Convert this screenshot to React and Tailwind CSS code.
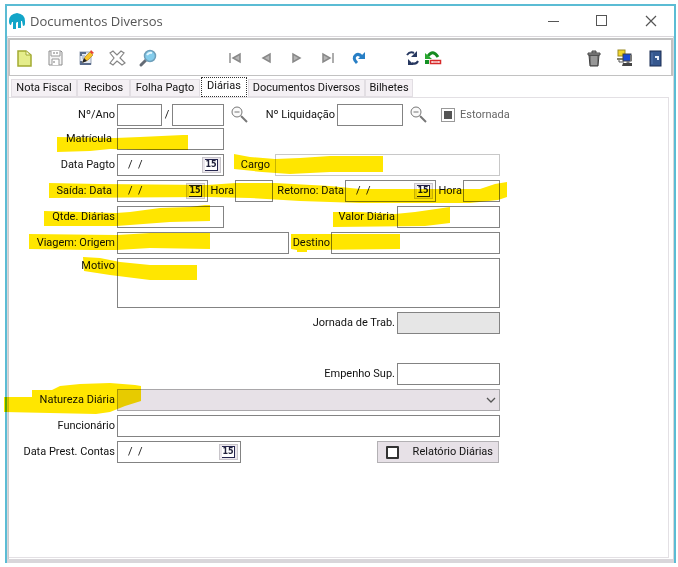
import React from 'react';

const tabs = [
  { label: 'Nota Fiscal', width: 'w-[66px]' },
  { label: 'Recibos', width: 'w-[53px]' },
  { label: 'Folha Pagto', width: 'w-[70px]' },
  { label: 'Diárias', width: 'w-[46px]', active: true },
  { label: 'Documentos Diversos', width: 'w-[117px]' },
  { label: 'Bilhetes', width: 'w-[48px]' },
];

// marker strokes laid over the fields that have to be filled in
const strokes = [
  'M57 137L115 138L140 137L183 135L188 135V150H150L110 149L90 151L57 152Z',
  'M234 154L250 157L275 159L300 158L330 156H383V172H330L290 174L262 172L234 169Z',
  'M49 183L100 184L207 185L236 183H275L330 186L360 189H480L495 184L507 182V197L498 200L470 203H360L300 201L250 198L207 197L49 198Z',
  'M44 211L116 213L130 212L160 208L190 207L205 205H210V221L170 222L130 225L116 226H44Z',
  'M29 234L117 235L150 233H210V249L150 248L117 250H90L29 249Z',
  'M83 257L100 258L120 262L150 265H197V280H150L110 275L84 271Z',
  'M333 212H360L395 214L415 212L450 207V223L425 226L333 227Z',
  'M291 234H400V249L307 250V252H297V250L291 249Z',
  'M4 397H32V390H52L60 386L80 384L110 383L135 385L141 386V401L125 406L110 412L96 414L50 413L4 412Z',
];

const Icon = ({ children, size = 20 }) => (
  <svg width={size} height={size} viewBox="0 0 20 20" fill="none" aria-hidden="true">
    {children}
  </svg>
);

const ToolButton = ({ label, children }) => (
  <button type="button" aria-label={label} className="flex size-5 items-center justify-center">
    <Icon>{children}</Icon>
  </button>
);

const LookupButton = ({ label }) => (
  <button type="button" aria-label={label} className="mx-[6px] size-5 shrink-0">
    <Icon>
      <path d="M11 11L17 17" stroke="#777" strokeWidth="2" />
      <circle cx="7" cy="7" r="5" fill="#fafafa" stroke="#777" />
      <path d="M4.5 7H9.500" stroke="#777" />
    </Icon>
  </button>
);

const Label = ({ htmlFor, className = '', children }) => (
  <label htmlFor={htmlFor} className={`shrink-0 whitespace-nowrap text-right ${className}`}>
    {children}
  </label>
);

const Field = ({ id, className = '', ...rest }) => (
  <input id={id} type="text" className={`h-[22px] min-w-0 border border-[#838383] px-1 outline-none ${className}`} {...rest} />
);

const DateField = ({ id, className = '' }) => (
  <div className={`flex h-[22px] items-center border border-[#838383] bg-white pr-[2px] ${className}`}>
    <input id={id} type="text" defaultValue="/  /" className="min-w-0 flex-1 whitespace-pre bg-transparent pl-[10px] outline-none" />
    <button type="button" aria-label="Abrir calendário" className="flex h-4 w-[19px] shrink-0 items-center justify-center border border-[#c8c5ca] bg-[#ebe7ec]">
      <span className="flex h-3 w-[13px] items-center justify-center border-t border-r border-b border-[#26264f] bg-white font-['DejaVu_Sans'] text-[8px] leading-none font-bold text-[#22223c]">15</span>
    </button>
  </div>
);

const Toolbar = () => (
  <div className="flex h-[38px] items-center border-2 border-b border-[#c2c2c2] bg-white px-1">
    <div className="flex gap-[11px]">
      <ToolButton label="Novo">
        <path d="M4 3H12L17 7V18H4Z" fill="#e5ed8b" stroke="#a2aa32" strokeWidth="1.500" />
        <path d="M12 3V7H16" fill="#fbfddb" stroke="#a2aa32" />
      </ToolButton>
      <ToolButton label="Salvar">
        <path d="M4 3H16L17 4V17H4Z" fill="#f5f5f5" stroke="#8d8d8d" />
        <path d="M6 3V8H15V3M7 17V11H14V17" fill="#fff" stroke="#999" />
        <path d="M9 4V6M12 4V6M9 13V15" stroke="#777" />
      </ToolButton>
      <ToolButton label="Editar">
        <rect x="4" y="4" width="11" height="12" fill="#e4e9f2" stroke="#9aa5b8" />
        <path d="M4 4H10V6H6V8H4ZM4 13H6V15H15V17H4Z" fill="#5a6c8b" />
        <path d="M6 8H9M6 10H8" stroke="#8fa2c1" />
        <path d="M7 14L9 9L14 4L17 7L12 12Z" fill="#f8c52c" stroke="#b3861a" strokeWidth=".7" />
        <path d="M14 4L15 2L18 5L16 6Z" fill="#e83f35" />
        <path d="M6 15L8 10L11 13Z" fill="#222" />
      </ToolButton>
      <ToolButton label="Excluir">
        <path d="M3 5L6 3L10 7L14 3L17 5L13 10L18 15L15 17L10 13L6 17L3 15L7 10Z" fill="#fff" stroke="#858585" strokeWidth="1.200" />
      </ToolButton>
      <ToolButton label="Pesquisar">
        <path d="M8 12L3 17" stroke="#646b75" strokeWidth="3" strokeLinecap="round" />
        <circle cx="12" cy="8" r="5.500" fill="#84cdec" stroke="#6f9fba" strokeWidth="1.500" />
        <path d="M9 7Q11 4 14 5" stroke="#e3f7ff" strokeWidth="2" />
      </ToolButton>
    </div>
    <div className="ml-[67px] flex gap-[11px]">
      <ToolButton label="Primeiro">
        <path d="M5 5V15" stroke="#929292" strokeWidth="1.500" />
        <path d="M15 6V14L8 10Z" fill="#b5b5b5" stroke="#888" strokeWidth="1.500" />
      </ToolButton>
      <ToolButton label="Anterior">
        <path d="M14 6V14L7 10Z" fill="#b5b5b5" stroke="#888" strokeWidth="1.500" />
      </ToolButton>
      <ToolButton label="Próximo">
        <path d="M6 6V14L13 10Z" fill="#b5b5b5" stroke="#888" strokeWidth="1.500" />
      </ToolButton>
      <ToolButton label="Último">
        <path d="M5 6V14L12 10Z" fill="#b5b5b5" stroke="#888" strokeWidth="1.500" />
        <path d="M15 5V15" stroke="#929292" strokeWidth="1.500" />
      </ToolButton>
      <ToolButton label="Atualizar">
        <path d="M8 15Q3 10 7 7Q10 5 13 9" stroke="#287fc5" strokeWidth="3" />
        <path d="M9 11H16V4Z" fill="#287fc5" />
      </ToolButton>
    </div>
    <div className="ml-[34px] flex">
      <ToolButton label="Sincronizar">
        <path d="M4 7Q7 3 11 5" stroke="#26375f" strokeWidth="2" />
        <path d="M8 9H14V3Z" fill="#26375f" />
        <path d="M15 13Q13 17 9 15" stroke="#26375f" strokeWidth="2" />
        <path d="M5 17V11L11 17Z" fill="#26375f" />
      </ToolButton>
      <ToolButton label="Estornar">
        <path d="M5 8Q10 1 15 9" stroke="#168a20" strokeWidth="3" />
        <path d="M2 5V11H9Z" fill="#28a72e" />
        <rect x="2" y="12" width="4" height="4" fill="#139124" />
        <rect x="7.500" y="12.500" width="10" height="3" fill="#fff" stroke="#d72a2a" strokeWidth="1.500" />
        <path d="M10 14H15" stroke="#ec8181" />
      </ToolButton>
    </div>
    <div className="ml-auto flex gap-[11px]">
      <ToolButton label="Lixeira">
        <path d="M4 7H14L13 18H5Z" fill="#737373" stroke="#3e3e3e" />
        <path d="M7 8V17M9 8V17M11 8V17" stroke="#bdbdbd" />
        <path d="M3 5H15V7H3ZM7 5V3H11V5" fill="#999" stroke="#484848" />
      </ToolButton>
      <ToolButton label="Rede">
        <rect x="2" y="2" width="7" height="6" fill="#f1d52a" stroke="#9b8b26" />
        <path d="M1 10H8V12H1Z" fill="#80806a" />
        <path d="M3 12V14H8" stroke="#555" />
        <rect x="7" y="6" width="8" height="7" fill="#1749d4" stroke="#414141" />
        <path d="M7 15H16V18H6Z" fill="#444" />
        <path d="M12 13V15" stroke="#777" strokeWidth="3" />
        <path d="M15 7V13" stroke="#777" strokeWidth="2" />
      </ToolButton>
      <ToolButton label="Sair">
        <rect x="3" y="3" width="11" height="15" fill="#36588f" stroke="#1b2d52" />
        <path d="M5 5V16" stroke="#5679af" />
        <path d="M8 8H12V12H10V10H8Z" fill="#e6edf8" />
      </ToolButton>
    </div>
  </div>
);

const TravelForm = () => (
  <form className="flex max-w-[510px] flex-col gap-1 pt-[6px]">
    <div className="flex flex-col gap-[2px]">
      <div className="flex items-center">
        <Label htmlFor="numero" className="w-[108px] pr-[2px]">Nº/Ano</Label>
        <Field id="numero" className="w-[45px]" />
        <span className="w-[10px] text-center">/</span>
        <Field aria-label="Ano" className="w-[52px]" />
        <LookupButton label="Buscar documento" />
        <Label htmlFor="liquidacao" className="w-[81px] pr-[2px]">Nº Liquidação</Label>
        <Field id="liquidacao" className="w-[66px]" />
        <LookupButton label="Buscar liquidação" />
        <label className="ml-[6px] flex items-center gap-[5px] text-[#666]">
          <input type="checkbox" disabled defaultChecked className="size-[14px] appearance-none border border-[#999] bg-[#555] bg-clip-content p-[2px]" />
          Estornada
        </label>
      </div>
      <div className="flex items-center">
        <Label htmlFor="matricula" className="w-[108px] pr-[5px]">Matrícula</Label>
        <Field id="matricula" className="w-[107px]" />
      </div>
    </div>
    <div className="mr-[19px] flex flex-col gap-1">
      <div className="flex items-center">
        <Label htmlFor="pagto" className="w-[108px] pr-[2px]">Data Pagto</Label>
        <DateField id="pagto" className="w-[107px]" />
        <Label htmlFor="cargo" className="w-[51px] pr-[5px]">Cargo</Label>
        <Field id="cargo" className="flex-1 border-[#c8c8c8]" />
      </div>
      <div className="flex items-center">
        <Label htmlFor="saida" className="w-[108px] pr-[5px]">Saída: Data</Label>
        <DateField id="saida" className="w-[91px]" />
        <Label htmlFor="hora-saida" className="w-[27px] pr-px">Hora</Label>
        <Field id="hora-saida" className="w-[38px]" />
        <Label htmlFor="retorno" className="w-[72px] pr-px">Retorno: Data</Label>
        <DateField id="retorno" className="w-[91px]" />
        <Label htmlFor="hora-retorno" className="w-[27px] pr-px">Hora</Label>
        <Field id="hora-retorno" className="flex-1" />
      </div>
      <div className="flex items-center">
        <Label htmlFor="qtde" className="w-[108px] pr-[2px]">Qtde. Diárias</Label>
        <Field id="qtde" className="w-[107px]" />
        <Label htmlFor="valor" className="ml-auto pr-[2px]">Valor Diária</Label>
        <Field id="valor" className="w-[103px]" />
      </div>
      <div className="flex items-center">
        <Label htmlFor="origem" className="w-[108px] pr-[2px]">Viagem: Origem</Label>
        <Field id="origem" className="w-[172px]" />
        <Label htmlFor="destino" className="w-[42px] pr-px">Destino</Label>
        <Field id="destino" className="flex-1" />
      </div>
      <div className="flex">
        <Label htmlFor="motivo" className="w-[108px] pr-[2px]">Motivo</Label>
        <textarea id="motivo" className="h-[50px] min-w-0 flex-1 resize-none border border-[#838383] p-1 outline-none" />
      </div>
      <div className="flex items-center justify-end">
        <Label htmlFor="jornada" className="pr-[2px]">Jornada de Trab.</Label>
        <Field id="jornada" disabled className="w-[103px] bg-[#e6e6e6]" />
      </div>
      <div className="mt-[25px] flex items-center justify-end">
        <Label htmlFor="empenho" className="pr-[2px]">Empenho Sup.</Label>
        <Field id="empenho" className="w-[103px]" />
      </div>
      <div className="flex items-center">
        <Label htmlFor="natureza" className="w-[108px] pr-[2px]">Natureza Diária</Label>
        <div className="relative flex-1">
          <select id="natureza" className="block h-[22px] w-full appearance-none border border-[#a9a7aa] bg-[#e7e1e7] outline-none" />
          <svg className="pointer-events-none absolute top-[7px] right-1" width="10" height="8" viewBox="0 0 10 8" fill="none" aria-hidden="true">
            <path d="M1 2L5 6L9 2" stroke="#555" strokeWidth="1.300" />
          </svg>
        </div>
      </div>
      <div className="flex items-center">
        <Label htmlFor="funcionario" className="w-[108px] pr-[2px]">Funcionário</Label>
        <Field id="funcionario" className="flex-1" />
      </div>
      <div className="flex items-center">
        <Label htmlFor="contas" className="w-[108px] pr-[2px]">Data Prest. Contas</Label>
        <DateField id="contas" className="w-[124px]" />
        <button type="button" className="mr-px ml-auto flex h-[22px] w-[122px] items-center justify-between border border-[#b3b1b4] bg-[#e7e1e7] pr-[5px] pl-2">
          <span className="size-[13px] rounded-[1px] border-2 border-[#333] bg-white" />
          Relatório Diárias
        </button>
      </div>
    </div>
  </form>
);

const App = () => (
  <div className="relative flex min-h-screen flex-col bg-white pt-1 pr-[2px] pb-1 pl-[5px] font-[Roboto,'Liberation_Sans',sans-serif] text-[11px] leading-4 text-[#111]">
    <div className="flex flex-1 flex-col border-2 border-b-0 border-[#5bbcd4]">
      <header className="flex h-[30px] items-center pl-[2px]">
        <svg width="16" height="16" viewBox="0 0 16 16" fill="#12a5c8" aria-hidden="true">
          <path d="M0 8Q0 1 8 0Q16 1 16 8V11Q16 13 14 13L13 8H12V15H9V9H8L7 10V16H4V9H3L2 12Q0 12 0 8Z" />
        </svg>
        <h1 className="ml-[5px] font-['Open_Sans',sans-serif] text-[13px] text-[#555]">Documentos Diversos</h1>
        <div className="ml-auto flex gap-[29px] pr-[13px] text-[#555]">
          <button type="button" aria-label="Minimizar">
            <Icon><path d="M5 10.500H16" stroke="currentColor" /></Icon>
          </button>
          <button type="button" aria-label="Maximizar">
            <Icon><rect x="4.500" y="4.500" width="10" height="10" stroke="currentColor" /></Icon>
          </button>
          <button type="button" aria-label="Fechar">
            <Icon><path d="M5 5L15 15M15 5L5 15" stroke="currentColor" strokeWidth="1.200" /></Icon>
          </button>
        </div>
      </header>
      <main className="flex flex-1 flex-col border border-b-4 border-[#d9d6da] pt-px">
        <Toolbar />
        <div className="flex flex-1 flex-col border-l border-[#ccc] pr-1 pb-px">
          <div role="tablist" className="flex h-[21px] items-end pl-[2px]">
            {tabs.map((tab) => (
              <button
                key={tab.label}
                type="button"
                role="tab"
                aria-selected={!!tab.active}
                className={`shrink-0 whitespace-nowrap border ${tab.width} ${tab.active ? 'h-5 border-dotted border-[#333] bg-white pb-1 mx-px' : 'h-[18px] border-[#e2dee3] bg-[#f4f0f4]'}`}
              >
                {tab.label}
              </button>
            ))}
          </div>
          <section className="flex-1 border-t border-r border-b border-[#e3e0e4]">
            <TravelForm />
          </section>
        </div>
      </main>
    </div>
    <svg className="pointer-events-none absolute top-0 left-0 mix-blend-multiply" width="678" height="567" viewBox="0 0 678 567" fill="#ffe600" aria-hidden="true">
      {strokes.map((d) => (
        <path key={d} d={d} />
      ))}
    </svg>
  </div>
);

export default App;
